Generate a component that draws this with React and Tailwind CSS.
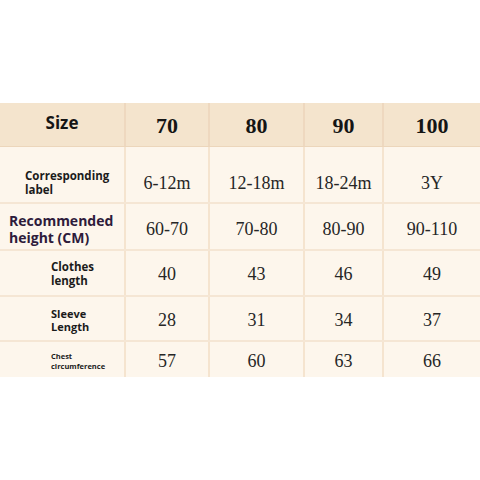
import React from 'react';

const sizes = ['70', '80', '90', '100'];

const rows = [
  { label: ['Corresponding', 'label'], h: 'h-[57px]', pad: 'pt-[17px]', lbl: 'pl-[25px] text-[11.5px] leading-[14px] text-[#1b1b1b]', values: ['6-12m', '12-18m', '18-24m', '3Y'] },
  { label: ['Recommended', 'height (CM)'], h: 'h-[47px]', pad: 'pt-[5px]', lbl: 'pl-[9px] text-[14px] leading-[17px] text-[#2e1b3b]', values: ['60-70', '70-80', '80-90', '90-110'] },
  { label: ['Clothes', 'length'], h: 'h-[46px]', pad: 'pt-[2px]', lbl: 'pl-[51px] text-[11.5px] leading-[14px] text-[#1b1b1b]', values: ['40', '43', '46', '49'] },
  { label: ['Sleeve', 'Length'], h: 'h-[45px]', pad: 'pt-[3px]', lbl: 'pl-[51px] text-[11px] leading-[13px] text-[#1b1b1b]', values: ['28', '31', '34', '37'] },
  { label: ['Chest', 'circumference'], h: 'h-[35px]', pad: 'pt-[3px]', lbl: 'pl-[51px] text-[7.5px] leading-[10px] text-[#1b1b1b]', values: ['57', '60', '63', '66'] },
];

const cols = 'grid grid-cols-[126px_84px_95px_79px_1fr]';
const sans = "font-['Open_Sans','Noto_Sans',sans-serif]";
const serif = "font-['Liberation_Serif','DejaVu_Serif',serif]";

export default function App() {
  return (
    <div className="w-[480px] h-[480px] bg-white pt-[103px]">
      <div className="bg-[#fdf6ec]">
        <div className={`${cols} h-[44px] bg-[#f4e4cd] border-b border-[#ecd6bb]`}>
          <div className={`flex items-center justify-center pb-[4px] border-r-2 border-[#eed8bf] ${sans} font-bold text-[17px] text-[#151515]`}>Size</div>
          {sizes.map((s) => (
            <div key={s} className={`flex items-center justify-center pt-[2px] border-r-2 border-[#eed8bf] last:border-r-0 ${serif} font-bold text-[22px] text-[#151515]`}>
              {s}
            </div>
          ))}
        </div>
        {rows.map((r, i) => (
          <div key={i} className={`${cols} ${r.h} border-b-2 border-[#f5e6d4] last:border-b-0`}>
            <div className={`flex flex-col justify-center border-r-2 border-[#f5e4cf] ${r.pad} ${sans} font-bold ${r.lbl}`}>
              <span>{r.label[0]}</span>
              <span>{r.label[1]}</span>
            </div>
            {r.values.map((v, j) => (
              <div key={j} className={`flex items-center justify-center border-r-2 border-[#f5e4cf] last:border-r-0 ${r.pad} ${serif} text-[18px] text-[#262626]`}>
                {v}
              </div>
            ))}
          </div>
        ))}
      </div>
    </div>
  );
}
